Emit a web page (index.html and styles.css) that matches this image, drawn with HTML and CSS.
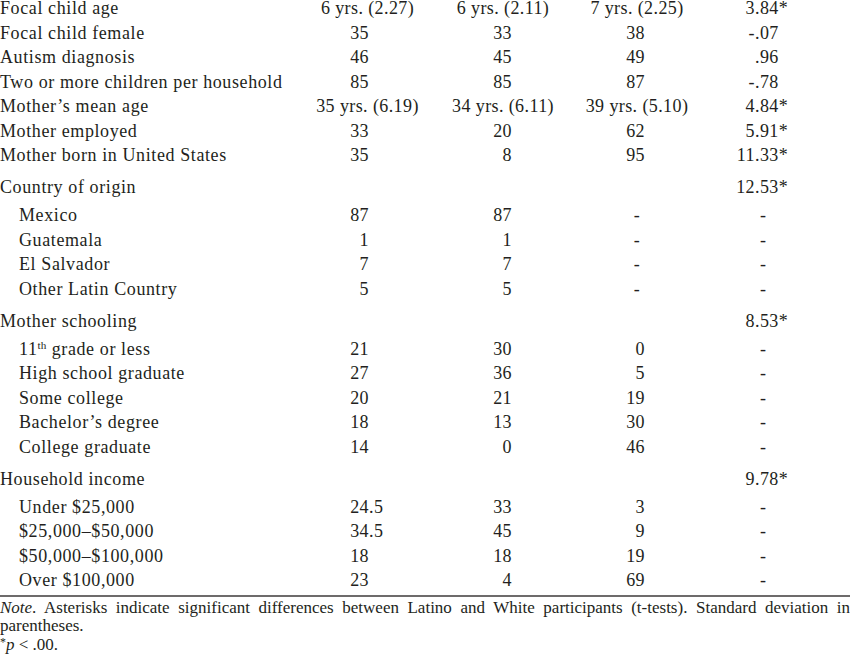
FILE: index.html
```html
<!DOCTYPE html>
<html lang="en">
<head>
<meta charset="utf-8">
<title>Participant characteristics</title>
<link rel="stylesheet" href="styles.css">
</head>
<body>
<div class="table">
  <div class="row"><span class="lab">Focal child age</span><span class="c c1 ctr">6 yrs. (2.27)</span><span class="c c2 ctr">6 yrs. (2.11)</span><span class="c c3 ctr">7 yrs. (2.25)</span><span class="c c4"><span class="i">3</span><span class="f">.84*</span></span></div>
  <div class="row"><span class="lab">Focal child female</span><span class="c c1"><span class="i">35</span></span><span class="c c2"><span class="i">33</span></span><span class="c c3"><span class="i">38</span></span><span class="c c4"><span class="i">-</span><span class="f">.07</span></span></div>
  <div class="row"><span class="lab">Autism diagnosis</span><span class="c c1"><span class="i">46</span></span><span class="c c2"><span class="i">45</span></span><span class="c c3"><span class="i">49</span></span><span class="c c4"><span class="i"></span><span class="f">.96</span></span></div>
  <div class="row"><span class="lab">Two or more children per household</span><span class="c c1"><span class="i">85</span></span><span class="c c2"><span class="i">85</span></span><span class="c c3"><span class="i">87</span></span><span class="c c4"><span class="i">-</span><span class="f">.78</span></span></div>
  <div class="row"><span class="lab">Mother’s mean age</span><span class="c c1 ctr">35 yrs. (6.19)</span><span class="c c2 ctr">34 yrs. (6.11)</span><span class="c c3 ctr">39 yrs. (5.10)</span><span class="c c4"><span class="i">4</span><span class="f">.84*</span></span></div>
  <div class="row"><span class="lab">Mother employed</span><span class="c c1"><span class="i">33</span></span><span class="c c2"><span class="i">20</span></span><span class="c c3"><span class="i">62</span></span><span class="c c4"><span class="i">5</span><span class="f">.91*</span></span></div>
  <div class="row"><span class="lab">Mother born in United States</span><span class="c c1"><span class="i">35</span></span><span class="c c2"><span class="i">8</span></span><span class="c c3"><span class="i">95</span></span><span class="c c4"><span class="i">11</span><span class="f">.33*</span></span></div>

  <div class="row grp"><span class="lab">Country of origin</span><span class="c c1"></span><span class="c c2"></span><span class="c c3"></span><span class="c c4"><span class="i">12</span><span class="f">.53*</span></span></div>
  <div class="row"><span class="lab sub">Mexico</span><span class="c c1"><span class="i">87</span></span><span class="c c2"><span class="i">87</span></span><span class="c c3 ctr">-</span><span class="c c4 dash">-</span></div>
  <div class="row"><span class="lab sub">Guatemala</span><span class="c c1"><span class="i">1</span></span><span class="c c2"><span class="i">1</span></span><span class="c c3 ctr">-</span><span class="c c4 dash">-</span></div>
  <div class="row"><span class="lab sub">El Salvador</span><span class="c c1"><span class="i">7</span></span><span class="c c2"><span class="i">7</span></span><span class="c c3 ctr">-</span><span class="c c4 dash">-</span></div>
  <div class="row"><span class="lab sub">Other Latin Country</span><span class="c c1"><span class="i">5</span></span><span class="c c2"><span class="i">5</span></span><span class="c c3 ctr">-</span><span class="c c4 dash">-</span></div>

  <div class="row grp"><span class="lab">Mother schooling</span><span class="c c1"></span><span class="c c2"></span><span class="c c3"></span><span class="c c4"><span class="i">8</span><span class="f">.53*</span></span></div>
  <div class="row"><span class="lab sub">11<sup class="sup">th</sup> grade or less</span><span class="c c1"><span class="i">21</span></span><span class="c c2"><span class="i">30</span></span><span class="c c3"><span class="i">0</span></span><span class="c c4 dash">-</span></div>
  <div class="row"><span class="lab sub">High school graduate</span><span class="c c1"><span class="i">27</span></span><span class="c c2"><span class="i">36</span></span><span class="c c3"><span class="i">5</span></span><span class="c c4 dash">-</span></div>
  <div class="row"><span class="lab sub">Some college</span><span class="c c1"><span class="i">20</span></span><span class="c c2"><span class="i">21</span></span><span class="c c3"><span class="i">19</span></span><span class="c c4 dash">-</span></div>
  <div class="row"><span class="lab sub">Bachelor’s degree</span><span class="c c1"><span class="i">18</span></span><span class="c c2"><span class="i">13</span></span><span class="c c3"><span class="i">30</span></span><span class="c c4 dash">-</span></div>
  <div class="row"><span class="lab sub">College graduate</span><span class="c c1"><span class="i">14</span></span><span class="c c2"><span class="i">0</span></span><span class="c c3"><span class="i">46</span></span><span class="c c4 dash">-</span></div>

  <div class="row grp"><span class="lab">Household income</span><span class="c c1"></span><span class="c c2"></span><span class="c c3"></span><span class="c c4"><span class="i">9</span><span class="f">.78*</span></span></div>
  <div class="row"><span class="lab sub">Under $25,000</span><span class="c c1"><span class="i">24</span><span class="f">.5</span></span><span class="c c2"><span class="i">33</span></span><span class="c c3"><span class="i">3</span></span><span class="c c4 dash">-</span></div>
  <div class="row"><span class="lab sub">$25,000–$50,000</span><span class="c c1"><span class="i">34</span><span class="f">.5</span></span><span class="c c2"><span class="i">45</span></span><span class="c c3"><span class="i">9</span></span><span class="c c4 dash">-</span></div>
  <div class="row"><span class="lab sub">$50,000–$100,000</span><span class="c c1"><span class="i">18</span></span><span class="c c2"><span class="i">18</span></span><span class="c c3"><span class="i">19</span></span><span class="c c4 dash">-</span></div>
  <div class="row"><span class="lab sub">Over $100,000</span><span class="c c1"><span class="i">23</span></span><span class="c c2"><span class="i">4</span></span><span class="c c3"><span class="i">69</span></span><span class="c c4 dash">-</span></div>
</div>
<div class="note">
  <div class="note-line"><em>Note</em>. Asterisks indicate significant differences between Latino and White participants (t-tests). Standard deviation in</div>
  <div>parentheses.</div>
  <div><sup class="star">*</sup><em>p</em> &lt; .00.</div>
</div>
</body>
</html>
```
FILE: styles.css
```css
html, body {
  margin: 0;
  padding: 0;
  background: #ffffff;
}
body {
  width: 850px;
  height: 656px;
  overflow: hidden;
  color: #231f20;
  font-family: "Liberation Serif", "Times New Roman", serif;
}
.table {
  margin-top: -4px;
  font-size: 18px;
  letter-spacing: 0.4px;
  line-height: 24.5px;
}
.row {
  display: grid;
  grid-template-columns: 300px 135px 136px 132px 147px;
  white-space: nowrap;
}
.row.grp {
  margin-top: 7.5px;
  padding-bottom: 3.5px;
}
.lab {
  padding-left: 0;
  letter-spacing: 0.6px;
}
.lab.sub {
  padding-left: 19px;
}
.sup {
  font-size: 0.62em;
  line-height: 0;
  vertical-align: 0.55em;
  letter-spacing: 0.2px;
}
.c {
  display: flex;
}
.c.ctr {
  justify-content: center;
}
.i {
  text-align: right;
  flex: none;
}
.c1 .i { width: 69px; }
.c2 .i { width: 77px; }
.c3 .i { width: 74px; }
.c4 .i { width: 52px; }
.f {
  text-align: left;
}
.c4.dash {
  padding-left: 57px;
}
.note {
  border-top: 2px solid #6d6b6b;
  margin-top: 2px;
  padding-top: 2px;
  font-size: 17px;
  line-height: 18.7px;
}
.note-line {
  text-align: justify;
  text-align-last: justify;
}
.star {
  font-size: 0.7em;
  line-height: 0;
  vertical-align: 0.35em;
}
```
